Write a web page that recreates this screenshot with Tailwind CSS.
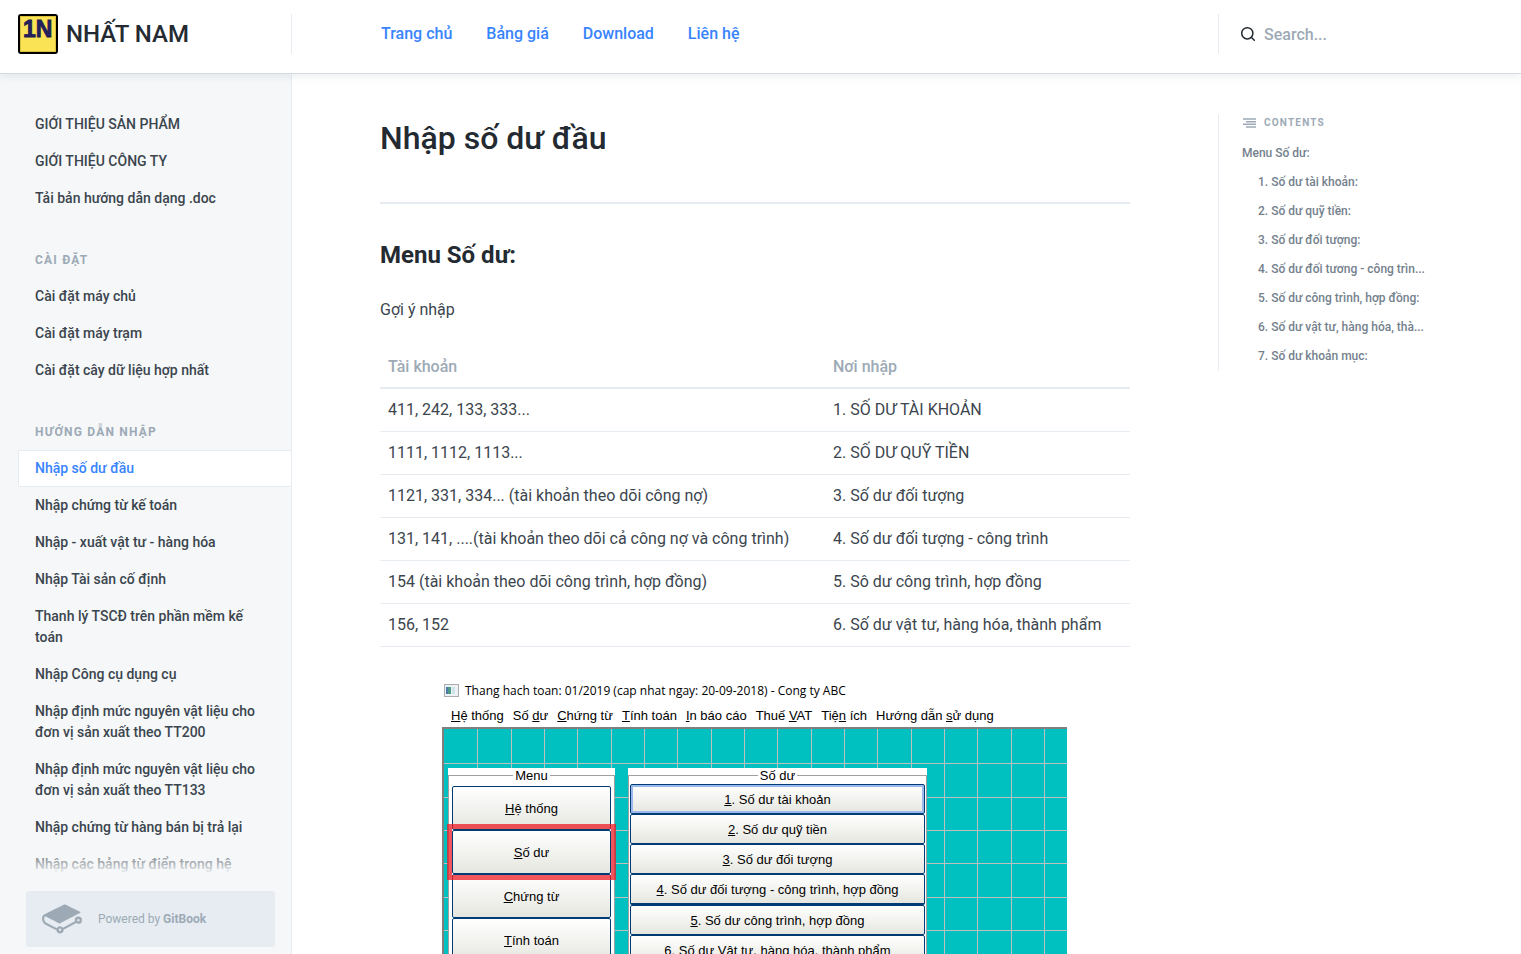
<!DOCTYPE html>
<html lang="vi">
<head>
<meta charset="utf-8">
<meta name="viewport" content="width=device-width, initial-scale=1">
<title>Nhập số dư đầu - NHẤT NAM</title>
<script src="https://cdn.jsdelivr.net/npm/@tailwindcss/browser@4"></script>
</head>
<body class="flex h-screen flex-col overflow-hidden bg-white font-['Roboto',sans-serif] text-[#3b454e]">

<header class="relative z-10 flex h-[74px] shrink-0 items-start border-b border-[#d4dadf] bg-white pt-[14px] shadow-[0_3px_8px_0_rgba(116,129,141,0.12)]">
  <a href="#" class="flex h-10 w-[292px] shrink-0 items-center gap-2 border-r border-[#e6ecf1] pl-[18px] text-2xl font-medium text-[#242a31]">
    <svg class="size-10" viewBox="0 0 40 40" role="img" aria-label="1N">
      <rect x="1" y="1" width="38" height="38" rx="2" fill="#fbe356" stroke="#000" stroke-width="2"/>
      <rect x="2.5" y="2.5" width="35" height="35" fill="none" stroke="#d9c13f"/>
      <text x="5" y="23" class="font-['Liberation_Sans',sans-serif] text-[23px] font-bold" fill="#262262" stroke="#1c1a4a" stroke-width=".8">1N</text>
    </svg>
    NHẤT NAM
  </a>
  <nav class="flex h-10 flex-1 items-center gap-[34px] pl-[89px] text-base font-medium text-[#3884ff]">
    <a href="#">Trang chủ</a>
    <a href="#">Bảng giá</a>
    <a href="#">Download</a>
    <a href="#">Liên hệ</a>
  </nav>
  <label class="flex h-10 w-[303px] shrink-0 items-center gap-2 border-l border-[#e6ecf1] pl-[21px]">
    <svg class="size-4 shrink-0 text-[#242a31]" viewBox="0 0 16 16" fill="none" stroke="currentColor" stroke-width="1.500" stroke-linecap="round" aria-hidden="true"><circle cx="7.300" cy="7.300" r="5.600"/><path d="M11.500 11.500 14.300 14.300"/></svg>
    <input type="text" aria-label="Search" placeholder="Search..." class="w-full min-w-0 bg-transparent pt-[2px] text-base font-medium outline-none placeholder:text-[#9daab6]">
  </label>
</header>

<div class="flex min-h-0 flex-1">
  <aside class="flex w-[292px] shrink-0 flex-col border-r border-[#e6ecf1] bg-[#f5f7f9]">
    <nav class="relative min-h-0 flex-1 overflow-hidden pt-8 pl-[18px] text-sm leading-[21px] font-medium">
      <ul>
        <li><a href="#" class="block border border-transparent py-[7px] pr-6 pl-4">GIỚI THIỆU SẢN PHẨM</a></li>
        <li><a href="#" class="block border border-transparent py-[7px] pr-6 pl-4">GIỚI THIỆU CÔNG TY</a></li>
        <li><a href="#" class="block border border-transparent py-[7px] pr-6 pl-4">Tải bản hướng dẫn dạng .doc</a></li>
      </ul>
      <h2 class="mt-[33px] mb-[7px] pl-[17px] text-xs leading-[21px] font-bold tracking-[1.2px] text-[#9daab6]">CÀI ĐẶT</h2>
      <ul>
        <li><a href="#" class="block border border-transparent py-[7px] pr-6 pl-4">Cài đặt máy chủ</a></li>
        <li><a href="#" class="block border border-transparent py-[7px] pr-6 pl-4">Cài đặt máy trạm</a></li>
        <li><a href="#" class="block border border-transparent py-[7px] pr-6 pl-4">Cài đặt cây dữ liệu hợp nhất</a></li>
      </ul>
      <h2 class="mt-[33px] mb-[7px] pl-[17px] text-xs leading-[21px] font-bold tracking-[1.2px] text-[#9daab6]">HƯỚNG DẪN NHẬP</h2>
      <ul>
        <li><a href="#" aria-current="page" class="block border border-r-0 border-[#e6ecf1] bg-white py-[7px] pr-6 pl-4 text-[#3884ff]">Nhập số dư đầu</a></li>
        <li><a href="#" class="block border border-transparent py-[7px] pr-6 pl-4">Nhập chứng từ kế toán</a></li>
        <li><a href="#" class="block border border-transparent py-[7px] pr-6 pl-4">Nhập - xuất vật tư - hàng hóa</a></li>
        <li><a href="#" class="block border border-transparent py-[7px] pr-6 pl-4">Nhập Tài sản cố định</a></li>
        <li><a href="#" class="block border border-transparent py-[7px] pr-6 pl-4">Thanh lý TSCĐ trên phần mềm kế toán</a></li>
        <li><a href="#" class="block border border-transparent py-[7px] pr-6 pl-4">Nhập Công cụ dụng cụ</a></li>
        <li><a href="#" class="block border border-transparent py-[7px] pr-6 pl-4">Nhập định mức nguyên vật liệu cho đơn vị sản xuất theo TT200</a></li>
        <li><a href="#" class="block border border-transparent py-[7px] pr-6 pl-4">Nhập định mức nguyên vật liệu cho đơn vị sản xuất theo TT133</a></li>
        <li><a href="#" class="block border border-transparent py-[7px] pr-6 pl-4">Nhập chứng từ hàng bán bị trả lại</a></li>
        <li><a href="#" class="block border border-transparent py-[7px] pr-6 pl-4">Nhập các bảng từ điển trong hệ thống</a></li>
      </ul>
      <div class="pointer-events-none absolute inset-x-0 bottom-0 h-6 bg-linear-to-b from-[#f5f7f9]/20 to-[#f5f7f9]"></div>
    </nav>
    <a href="#" class="mt-4 mr-4 mb-[7px] ml-[26px] flex h-14 items-center gap-4 rounded-[3px] bg-[#e6ecf1] pl-4 text-xs text-[#9daab6]">
      <svg class="h-[30px] w-10" viewBox="0 3 24 18" fill="currentColor" aria-hidden="true">
        <path d="M10.802 17.77a.703.703 0 1 1-.002 1.406.703.703 0 0 1 .002-1.406m11.024-4.347a.703.703 0 1 1 .001-1.406.703.703 0 0 1-.001 1.406m0-2.876a2.176 2.176 0 0 0-2.174 2.174c0 .233.039.465.115.691l-7.181 3.823a2.165 2.165 0 0 0-1.784-.937c-.829 0-1.584.475-1.95 1.216l-6.451-3.402c-.682-.358-1.192-1.48-1.138-2.502.028-.533.212-.947.493-1.107.178-.1.392-.092.62.027l.042.023c1.71.9 7.304 3.847 7.54 3.956.363.169.565.237 1.185-.057l11.564-6.014c.17-.064.368-.227.368-.474 0-.342-.354-.477-.355-.477-.658-.315-1.669-.788-2.655-1.25-2.108-.987-4.497-2.105-5.546-2.655-.906-.474-1.635-.074-1.765.006l-.252.125C7.78 6.048 1.46 9.178 1.1 9.397.457 9.789.058 10.57.006 11.539c-.08 1.537.703 3.14 1.824 3.727l6.822 3.518a2.175 2.175 0 0 0 2.15 1.862 2.177 2.177 0 0 0 2.173-2.14l7.514-4.073c.38.298.853.461 1.337.461A2.176 2.176 0 0 0 24 12.72a2.176 2.176 0 0 0-2.174-2.174"/>
      </svg>
      <span>Powered by <b class="font-bold">GitBook</b></span>
    </a>
  </aside>

  <main class="min-w-0 flex-1 overflow-hidden px-[88px] pt-10">
    <h1 class="border-b-2 border-[#e6ecf1] pb-10 text-[32px] leading-[48px] font-medium text-[#242a31]">Nhập số dư đầu</h1>
    <h2 class="mt-[33px] text-2xl leading-9 font-bold text-[#242a31]">Menu Số dư:</h2>
    <p class="mt-6 text-base leading-[26px]">Gợi ý nhập</p>
    <table class="mt-[22px] w-full border-separate border-spacing-0 text-left text-base leading-[26px]">
      <thead>
        <tr class="text-[#9daab6]"><th class="w-[445px] border-b-2 border-[#e6ecf1] px-2 pt-[9px] pb-[7px] font-medium">Tài khoản</th><th class="border-b-2 border-[#e6ecf1] px-2 pt-[9px] pb-[7px] font-medium">Nơi nhập</th></tr>
      </thead>
      <tbody>
        <tr><td class="border-b border-[#e6ecf1] p-2">411, 242, 133, 333...</td><td class="border-b border-[#e6ecf1] p-2">1. SỐ DƯ TÀI KHOẢN</td></tr>
        <tr><td class="border-b border-[#e6ecf1] p-2">1111, 1112, 1113...</td><td class="border-b border-[#e6ecf1] p-2">2. SỐ DƯ QUỸ TIỀN</td></tr>
        <tr><td class="border-b border-[#e6ecf1] p-2">1121, 331, 334... (tài khoản theo dõi công nợ)</td><td class="border-b border-[#e6ecf1] p-2">3. Số dư đối tượng</td></tr>
        <tr><td class="border-b border-[#e6ecf1] p-2">131, 141, ....(tài khoản theo dõi cả công nợ và công trình)</td><td class="border-b border-[#e6ecf1] p-2">4. Số dư đối tượng - công trình</td></tr>
        <tr><td class="border-b border-[#e6ecf1] p-2">154 (tài khoản theo dõi công trình, hợp đồng)</td><td class="border-b border-[#e6ecf1] p-2">5. Sô dư công trình, hợp đồng</td></tr>
        <tr><td class="border-b border-[#e6ecf1] p-2">156, 152</td><td class="border-b border-[#e6ecf1] p-2">6. Số dư vật tư, hàng hóa, thành phẩm</td></tr>
      </tbody>
    </table>

    <!-- Application window illustration -->
    <figure class="mt-8 ml-[62px] w-[625px] font-['Liberation_Sans',sans-serif] text-[13px] text-black">
      <div class="flex h-6 items-center gap-[6px] pl-[2px] font-['Open_Sans',sans-serif] text-xs">
        <svg class="mb-[2px] h-[13px] w-[15px]" viewBox="0 0 15 13" aria-hidden="true"><rect x=".5" y=".5" width="14" height="12" fill="#eef1f3" stroke="#a9adb2"/><rect x="2" y="3" width="5" height="7" fill="#4d9a86"/><path d="M2 3H4V10H2Z" fill="#4a7aa8"/><rect x="8" y="3" width="3" height="7" fill="#cfe3ea"/></svg>
        <span class="whitespace-nowrap">Thang hach toan: 01/2019 (cap nhat ngay: 20-09-2018) - Cong ty ABC</span>
      </div>
      <div class="flex h-6 items-center gap-[9px] pt-[2px] pl-[9px] whitespace-nowrap">
        <span><u>H</u>ệ thống</span><span>Số <u>d</u>ư</span><span><u>C</u>hứng từ</span><span><u>T</u>ính toán</span><span><u>I</u>n báo cáo</span><span>Thuế <u>V</u>AT</span><span>Tiệ<u>n</u> ích</span><span>Hướng dẫn <u>s</u>ử dụng</span>
      </div>
      <div class="relative flex h-[260px] items-start gap-[13px] border-t-2 border-l-2 border-[#808080] bg-[#00c0c0] pt-[39px] pl-1">
        <svg class="absolute inset-0 size-full" aria-hidden="true" stroke="#c0c0c0" shape-rendering="crispEdges">
          <path d="M33.500 0V260M67.500 0V260M100.500 0V260M133.500 0V260M167.500 0V260M200.500 0V260M233.500 0V260M267.500 0V260M300.500 0V260M333.500 0V260M367.500 0V260M400.500 0V260M433.500 0V260M467.500 0V260M500.500 0V260M533.500 0V260M567.500 0V260M600.500 0V260M0 34.500H623M0 68.500H623M0 101.500H623M0 134.500H623M0 168.500H623M0 201.500H623"/>
        </svg>
        <div class="relative h-[221px] w-[167px] bg-white">
          <fieldset class="h-[221px] border border-b-0 border-[#a0a0a0]">
            <legend class="mx-auto h-[15px] px-[2px] leading-[15px]">Menu</legend>
          </fieldset>
          <div class="absolute inset-x-1 top-[18px] flex flex-col">
            <button class="h-11 rounded-[2px] border border-[#003c74] bg-linear-to-b from-white to-[#e6e6e0] pt-[2px]"><u>H</u>ệ thống</button>
            <button class="h-11 rounded-[2px] border border-[#003c74] bg-linear-to-b from-white to-[#e6e6e0] pt-[2px]"><u>S</u>ố dư</button>
            <button class="h-11 rounded-[2px] border border-[#003c74] bg-linear-to-b from-white to-[#e6e6e0] pt-[2px]"><u>C</u>hứng từ</button>
            <button class="h-11 rounded-[2px] border border-[#003c74] bg-linear-to-b from-white to-[#e6e6e0] pt-[2px]"><u>T</u>ính toán</button>
          </div>
          <div class="absolute -inset-x-px top-14 h-14 border-[5px] border-[#ed1c24]/75"></div>
        </div>
        <div class="relative h-[221px] w-[299px] bg-white">
          <fieldset class="h-[221px] border border-b-0 border-[#a0a0a0]">
            <legend class="mx-auto h-[15px] px-[2px] leading-[15px]">Số dư</legend>
          </fieldset>
          <div class="absolute inset-x-[2px] top-4 flex flex-col">
            <button class="h-[30px] rounded-[2px] border border-[#003c74] bg-linear-to-b from-white to-[#e6e6e0] pt-[2px] inset-ring-2 inset-ring-[#9bb9ec]"><u>1</u>. Số dư tài khoản</button>
            <button class="h-[30px] rounded-[2px] border border-[#003c74] bg-linear-to-b from-white to-[#e6e6e0] pt-[2px]"><u>2</u>. Số dư quỹ tiền</button>
            <button class="h-[30px] rounded-[2px] border border-[#003c74] bg-linear-to-b from-white to-[#e6e6e0] pt-[2px]"><u>3</u>. Số dư đối tượng</button>
            <button class="h-[31px] rounded-[2px] border border-b-2 border-[#003c74] bg-linear-to-b from-white to-[#e6e6e0] pt-[2px]"><u>4</u>. Số dư đối tượng - công trình, hợp đồng</button>
            <button class="h-[30px] rounded-[2px] border border-[#003c74] bg-linear-to-b from-white to-[#e6e6e0] pt-[2px]"><u>5</u>. Số dư công trình, hợp đồng</button>
            <button class="h-[30px] rounded-[2px] border border-[#003c74] bg-linear-to-b from-white to-[#e6e6e0] pt-[2px]"><u>6</u>. Số dư Vật tư, hàng hóa, thành phẩm</button>
          </div>
        </div>
      </div>
    </figure>
  </main>

  <aside class="w-[303px] shrink-0 pt-10">
    <nav class="border-l border-[#e6ecf1] pl-[23px] text-xs font-medium text-[#74818d]">
      <h2 class="flex h-[18px] items-center gap-2 pl-px text-[10px] font-bold tracking-[1.2px] text-[#9daab6]">
        <svg class="h-[10px] w-[13px]" viewBox="0 0 13 10" stroke="currentColor" stroke-width="1.400" aria-hidden="true"><path d="M0 1H13M3 3.700H13M0 6.300H13M3 9H13"/></svg>
        CONTENTS
      </h2>
      <ul class="mt-[7px] leading-[29px]">
        <li><a href="#">Menu Số dư:</a></li>
        <li class="pl-4"><a href="#">1. Số dư tài khoản:</a></li>
        <li class="pl-4"><a href="#">2. Số dư quỹ tiền:</a></li>
        <li class="pl-4"><a href="#">3. Số dư đối tượng:</a></li>
        <li class="pl-4"><a href="#">4. Số dư đối tương - công trìn...</a></li>
        <li class="pl-4"><a href="#">5. Số dư công trình, hợp đồng:</a></li>
        <li class="pl-4"><a href="#">6. Số dư vật tư, hàng hóa, thà...</a></li>
        <li class="pl-4"><a href="#">7. Số dư khoản mục:</a></li>
      </ul>
    </nav>
  </aside>
</div>
</body>
</html>
